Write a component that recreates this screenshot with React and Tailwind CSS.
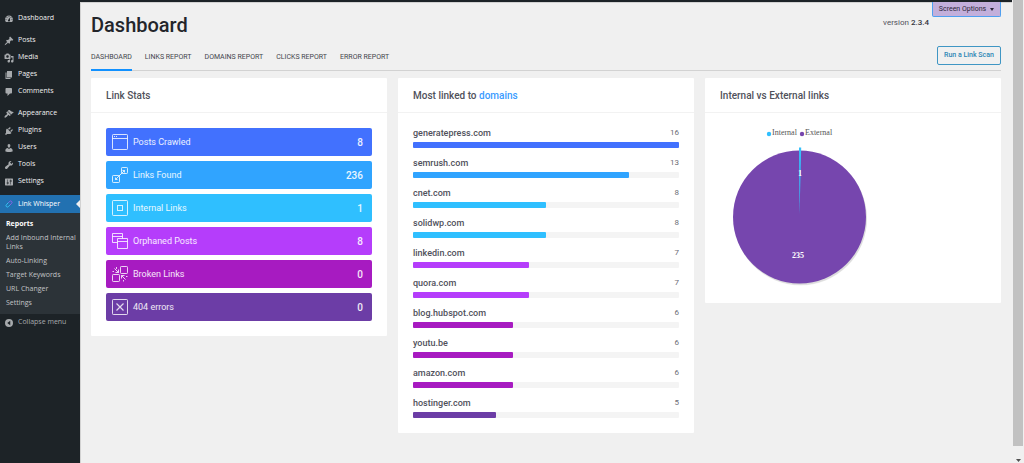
import React from "react";

const ICONS = {
  dashboard:
    "M3.76 16h12.48c1.1-1.37 1.76-3.11 1.76-5 0-4.42-3.58-8-8-8s-8 3.58-8 8c0 1.89.66 3.63 1.76 5zM10 4c.55 0 1 .45 1 1s-.45 1-1 1-1-.45-1-1 .45-1 1-1zM6 6c.55 0 1 .45 1 1s-.45 1-1 1-1-.45-1-1 .45-1 1-1zm8 0c.55 0 1 .45 1 1s-.45 1-1 1-1-.45-1-1 .45-1 1-1zm-5.37 5.55L12 7v6c0 1.1-.9 2-2 2s-2-.9-2-2c0-.57.24-1.08.63-1.45zM4 10c.55 0 1 .45 1 1s-.45 1-1 1-1-.45-1-1 .45-1 1-1zm12 0c.55 0 1 .45 1 1s-.45 1-1 1-1-.45-1-1 .45-1 1-1z",
  posts:
    "M10.44 3.02l1.82-1.82 6.36 6.35-1.83 1.82c-1.05-.68-2.48-.57-3.41.36l-.75.75c-.92.93-1.04 2.35-.35 3.41l-1.83 1.82-2.41-2.41-2.8 2.79c-.42.42-3.38 2.71-3.8 2.29s1.86-3.39 2.28-3.81l2.79-2.79L4.1 9.36l1.83-1.82c1.05.69 2.48.57 3.4-.36l.75-.75c.93-.92 1.05-2.35.36-3.41z",
  media:
    "M13 11V4c0-.55-.45-1-1-1h-1.67L9 1H5L3.67 3H2c-.55 0-1 .45-1 1v7c0 .55.45 1 1 1h10c.55 0 1-.45 1-1zM7 4.5c1.38 0 2.5 1.12 2.5 2.5S8.38 9.5 7 9.5 4.5 8.38 4.5 7 5.62 4.5 7 4.5zM14 6h5v10.5c0 1.38-1.12 2.5-2.5 2.5S14 17.88 14 16.5s1.12-2.5 2.5-2.5c.17 0 .34.02.5.05V9h-3V6zm-4 8.05V13h2v3.5c0 1.38-1.12 2.5-2.5 2.5S7 17.88 7 16.5 8.12 14 9.5 14c.17 0 .34.02.5.05z",
  pages: "M6 15V2h10v13H6zm-1 1h8v2H3V5h2v11z",
  comments:
    "M5 2h9c1.1 0 2 .9 2 2v7c0 1.1-.9 2-2 2h-2l-5 5v-5H5c-1.1 0-2-.9-2-2V4c0-1.1.9-2 2-2z",
  appearance:
    "M14.48 11.06L7.41 3.99l1.5-1.5c.5-.56 2.3-.47 3.51.32 1.21.8 1.43 1.28 2.91 2.1 1.18.64 2.45 1.26 4.45.85zm-.71.71L6.7 4.7 4.93 6.47c-.39.39-.39 1.02 0 1.41l1.06 1.06c.39.39.39 1.03 0 1.42-.6.6-1.43 1.11-2.21 1.69-.35.26-.7.53-1.01.84C1.43 14.23.4 16.08 1.4 17.07c.99 1 2.84-.03 4.18-1.36.31-.31.58-.66.85-1.02.57-.78 1.08-1.61 1.69-2.21.39-.39 1.02-.39 1.41 0l1.06 1.06c.39.39 1.02.39 1.41 0z",
  plugins:
    "M13.11 4.36L9.87 7.6 8 5.73l3.24-3.24c.35-.34 1.05-.2 1.56.32.52.51.66 1.21.31 1.55zm-8 1.77l.91-1.12 9.01 9.01-1.19.84c-.71.71-2.63 1.16-3.82 1.16H6.14L4.9 17.26c-.59.59-1.54.59-2.12 0-.59-.58-.59-1.53 0-2.12l1.24-1.24v-3.88c0-1.13.4-3.19 1.09-3.89zm7.26 3.97l3.24-3.24c.34-.35 1.04-.21 1.55.31.52.51.66 1.21.31 1.55l-3.24 3.25z",
  users:
    "M10 9.25c-2.27 0-2.73-3.44-2.73-3.44C7 4.02 7.82 2 9.97 2c2.16 0 2.98 2.02 2.71 3.81 0 0-.41 3.44-2.68 3.44zm0 2.57L12.72 10c2.39 0 4.52 2.33 4.52 4.53v2.49s-3.65 1.13-7.24 1.13c-3.65 0-7.24-1.13-7.24-1.13v-2.49c0-2.25 1.94-4.48 4.47-4.48z",
  tools:
    "M16.68 9.77c-1.34 1.34-3.3 1.67-4.95.99l-5.41 6.52c-.99.99-2.59.99-3.58 0s-.99-2.59 0-3.57l6.52-5.42c-.68-1.65-.35-3.61.99-4.95 1.28-1.28 3.12-1.62 4.72-1.06l-2.89 2.89 2.82 2.82 2.86-2.87c.53 1.58.18 3.39-1.08 4.65z",
  settings:
    "M18 16V4c0-.55-.45-1-1-1H3c-.55 0-1 .45-1 1v12c0 .55.45 1 1 1h14c.55 0 1-.45 1-1zM8 11h1c.55 0 1 .45 1 1s-.45 1-1 1H8v1.5c0 .28-.22.5-.5.5s-.5-.22-.5-.5V13H6c-.55 0-1-.45-1-1s.45-1 1-1h1V5.5c0-.28.22-.5.5-.5s.5.22.5.5V11zm5-2h-1c-.55 0-1-.45-1-1s.45-1 1-1h1V5.5c0-.28.22-.5.5-.5s.5.22.5.5V7h1c.55 0 1 .45 1 1s-.45 1-1 1h-1v5.5c0 .28-.22.5-.5.5s-.5-.22-.5-.5V9z",
  collapse:
    "M10 2a8 8 0 1 0 0 16a8 8 0 0 0 0-16zM12.5 5.5v9L6.5 10z",
};

const MENU = [
  [["dashboard", "Dashboard"]],
  [
    ["posts", "Posts"],
    ["media", "Media"],
    ["pages", "Pages"],
    ["comments", "Comments"],
  ],
  [
    ["appearance", "Appearance"],
    ["plugins", "Plugins"],
    ["users", "Users"],
    ["tools", "Tools"],
    ["settings", "Settings"],
  ],
];

const SUBMENU = [
  "Reports",
  "Add Inbound Internal Links",
  "Auto-Linking",
  "Target Keywords",
  "URL Changer",
  "Settings",
];

const TABS = [
  "DASHBOARD",
  "LINKS REPORT",
  "DOMAINS REPORT",
  "CLICKS REPORT",
  "ERROR REPORT",
];

const STATS = [
  { label: "Posts Crawled", value: 8, color: "bg-[#4271fe]", icon: "window" },
  { label: "Links Found", value: 236, color: "bg-[#30a4ff]", icon: "links" },
  { label: "Internal Links", value: 1, color: "bg-[#2fbfff]", icon: "internal" },
  { label: "Orphaned Posts", value: 8, color: "bg-[#b53dfb]", icon: "orphaned" },
  { label: "Broken Links", value: 0, color: "bg-[#a71bc1]", icon: "broken" },
  { label: "404 errors", value: 0, color: "bg-[#6c3da6]", icon: "error" },
];

const DOMAINS = [
  { name: "generatepress.com", count: 16, color: "bg-[#4271fe]" },
  { name: "semrush.com", count: 13, color: "bg-[#30a4ff]" },
  { name: "cnet.com", count: 8, color: "bg-[#2fbfff]" },
  { name: "solidwp.com", count: 8, color: "bg-[#2fbfff]" },
  { name: "linkedin.com", count: 7, color: "bg-[#b53dfb]" },
  { name: "quora.com", count: 7, color: "bg-[#b53dfb]" },
  { name: "blog.hubspot.com", count: 6, color: "bg-[#a71bc1]" },
  { name: "youtu.be", count: 6, color: "bg-[#a71bc1]" },
  { name: "amazon.com", count: 6, color: "bg-[#a71bc1]" },
  { name: "hostinger.com", count: 5, color: "bg-[#6c3da6]" },
];

function MenuIcon({ name }) {
  return (
    <svg viewBox="0 0 20 20" className="h-[10px] w-[10px] shrink-0 fill-[#a7aaad]" aria-hidden="true">
      <path fillRule="evenodd" d={ICONS[name]} />
    </svg>
  );
}

function Sidebar() {
  return (
    <aside className="w-20 shrink-0 bg-[#1d2327] pt-2 font-['Open_Sans','Noto_Sans',sans-serif] text-[7px] font-medium text-[#f0f0f1]">
      <nav aria-label="Main menu">
        <div className="mb-[5px] flex flex-col gap-[5px]">
          {MENU.map((group, i) => (
            <ul key={i}>
              {group.map(([icon, label]) => (
                <li key={label}>
                  <a href="#" className="flex h-[17px] items-center gap-1 pl-1">
                    <MenuIcon name={icon} />
                    {label}
                  </a>
                </li>
              ))}
            </ul>
          ))}
        </div>
        <a href="#" className="relative flex h-[18px] items-center gap-1 bg-[#2271b1] pl-1 text-white">
          <svg viewBox="0 0 20 20" className="h-[10px] w-[10px] shrink-0" fill="none" strokeWidth="2" strokeLinecap="round" aria-hidden="true">
            <path d="M9 7l2.500-2.200a2.600 2.600 0 0 1 3.700 3.700L12 12" stroke="#8a63e8" />
            <path d="M11 13l-2.500 2.200a2.600 2.600 0 0 1-3.700-3.700L8 8" stroke="#35c4f5" />
          </svg>
          Link Whisper
          <svg viewBox="0 0 4 8" className="absolute right-0 top-[5px] h-2 w-1 fill-[#f0f0f1]" aria-hidden="true">
            <path d="M4 0v8L0 4z" />
          </svg>
        </a>
        <ul className="flex flex-col gap-px bg-[#2c3338] pt-1 pb-[5px] font-normal text-[#c3c4c7]">
          {SUBMENU.map((label, i) => (
            <li key={label}>
              <a href="#" className={"block py-[2px] pl-[6px] leading-[9px] " + (i === 0 ? "font-bold text-white" : "")}>
                {label}
              </a>
            </li>
          ))}
        </ul>
        <button type="button" className="flex h-[17px] w-full items-center gap-1 pl-1 font-normal text-[#a7aaad]">
          <MenuIcon name="collapse" />
          Collapse menu
        </button>
      </nav>
    </aside>
  );
}

function StatIcon({ name }) {
  const shapes = {
    window: (
      <>
        <rect x="0.5" y="0.5" width="15" height="15" rx="0.8" />
        <path d="M0.500 4.500h15M2 2.500h1M4 2.500h1" />
      </>
    ),
    links: (
      <>
        <rect x="9.5" y="0.5" width="6" height="6" rx="0.8" />
        <rect x="0.5" y="8.500" width="7" height="7" rx="0.8" />
        <path d="M3.500 12.500L12.500 3.500M10.500 3.500h2v2M3.500 10.500v2h2" />
      </>
    ),
    internal: (
      <>
        <rect x="0.5" y="0.5" width="15" height="15" rx="0.8" />
        <rect x="5.500" y="5.500" width="5" height="5" />
      </>
    ),
    orphaned: (
      <>
        <path d="M5.500 9.500H0.500V0.500h10v5M0.500 3.500h10M5.500 5.500h10v10h-10zM5.500 8.500h10" />
      </>
    ),
    broken: (
      <>
        <rect x="8.500" y="0.500" width="7" height="7" rx="0.8" />
        <rect x="0.500" y="8.500" width="7" height="7" rx="0.8" />
        <path d="M2.500 2.500l4 4M6.500 3.500v3h-3M13.500 13.500l-4-4M9.500 12.500v-3h3M4.500 1v2M0.500 5.500h1.500M14 10.500h1.500M11.500 14v1.500" />
      </>
    ),
    error: (
      <>
        <rect x="0.5" y="0.5" width="15" height="15" rx="0.8" />
        <path d="M4.500 4.500l7 7M11.500 4.500l-7 7" strokeWidth="1.200" />
      </>
    ),
  };
  return (
    <svg viewBox="0 0 16 16" className="h-4 w-4 shrink-0 stroke-white/80" fill="none" strokeWidth="1" aria-hidden="true">
      {shapes[name]}
    </svg>
  );
}

function Card({ title, children }) {
  return (
    <section className="rounded-[1px] bg-white">
      <h2 className="flex h-[35px] items-center border-b border-[#f2f2f2] px-[15px] text-[10px] font-medium text-[#50515b]">
        {title}
      </h2>
      {children}
    </section>
  );
}

function PieChart() {
  return (
    <svg viewBox="0 0 190 190" className="block h-[190px] w-[190px]" role="img" aria-label="Internal 1, External 235">
      <circle cx="95.500" cy="106" r="66.500" fill="#000" opacity="0.060" />
      <circle cx="95.500" cy="105.500" r="66.500" fill="#000" opacity="0.080" />
      <circle cx="94.500" cy="104" r="66.500" fill="#7646ae" />
      <path d="M94.500 102L94 34.500h2.200z" fill="#36c0fa" />
      <g className="font-['Liberation_Serif',serif] text-[8px]">
        <circle cx="64" cy="21" r="2.200" fill="#2fbfff" />
        <text x="67" y="22" fill="#555">Internal</text>
        <circle cx="97" cy="21" r="2.200" fill="#7646ae" />
        <text x="100" y="22" fill="#555">External</text>
        <g fill="#fff" fontWeight="700" textAnchor="middle">
          <text x="95" y="63">1</text>
          <text x="93" y="145">235</text>
        </g>
      </g>
    </svg>
  );
}

export default function App() {
  const max = DOMAINS[0].count;
  return (
    <div className="flex min-h-screen bg-[#f0f0f0] font-['Roboto',sans-serif]">
      <div className="flex flex-1 flex-col">
        <div className="h-[2px] bg-[#1d2327]" />
        <div className="flex flex-1">
          <Sidebar />
          <main className="flex-1 border-t border-l border-[#d2d2d2] pr-[11px] pl-[10px]">
            <header className="flex h-[40px] items-start justify-between">
              <h1 className="pt-[9px] text-[20px] leading-[26px] font-medium text-[#23252b]">Dashboard</h1>
              <div className="flex items-start gap-[3px]">
                <p className="pt-[14px] text-[8px] leading-[12px] text-[#50515b]">
                  version <b className="font-medium text-[#33343c]">2.3.4</b>
                </p>
                <button
                  type="button"
                  className="-mt-px flex h-[15px] w-[69px] items-center justify-center gap-1 rounded-b-[2px] border border-t-0 border-[#4f9ff0] bg-[#c3afdb] text-[7px] text-[#2c2638]"
                >
                  Screen Options
                  <svg viewBox="0 0 4 3" className="h-[3px] w-1 fill-current" aria-hidden="true">
                    <path d="M0 0h4L2 3z" />
                  </svg>
                </button>
              </div>
            </header>

            <div className="flex h-[28px] items-stretch justify-between border-b border-[#d2d2d2]">
              <nav className="-mb-px flex gap-[13px] text-[7px] text-[#44454d]" aria-label="Reports">
                {TABS.map((tab, i) => (
                  <a
                    key={tab}
                    href="#"
                    className={
                      "flex items-center border-b-2 pt-[2px] " + (i === 0 ? "border-[#1291ff]" : "border-transparent")
                    }
                  >
                    {tab}
                  </a>
                ))}
              </nav>
              <button
                type="button"
                className="mt-[3px] h-[19px] w-16 rounded-[2px] border border-[#3f96c4] text-[7px] font-medium whitespace-nowrap text-[#2d86b5]"
              >
                Run a Link Scan
              </button>
            </div>

            <div className="mt-[7px] grid grid-cols-3 items-start gap-[11px]">
              <Card title="Link Stats">
                <ul className="flex flex-col gap-[5px] p-[15px]">
                  {STATS.map((s) => (
                    <li
                      key={s.label}
                      className={"flex h-7 items-center gap-[5px] rounded-[2px] pr-[9px] pl-[6px] text-white/90 " + s.color}
                    >
                      <StatIcon name={s.icon} />
                      <span className="flex-1 pt-px text-[9px]">{s.label}</span>
                      <span className="text-[10px] font-medium">{s.value}</span>
                    </li>
                  ))}
                </ul>
              </Card>

              <Card
                title={
                  <span>
                    Most linked to <a href="#" className="text-[#3a9bff]">domains</a>
                  </span>
                }
              >
                <ul className="flex flex-col gap-2 px-[15px] pt-[13px] pb-[15px]">
                  {DOMAINS.map((d) => (
                    <li key={d.name}>
                      <div className="flex items-center justify-between leading-[14px] text-[#50515b]">
                        <span className="text-[9px] font-medium">{d.name}</span>
                        <span className="text-[8px] text-[#6b6c75]">{d.count}</span>
                      </div>
                      <div className="mt-[2px] h-[6px] rounded-[1px] bg-[#f4f4f4]">
                        <div className={"h-full rounded-[1px] " + d.color} style={{ width: (d.count / max) * 100 + "%" }} />
                      </div>
                    </li>
                  ))}
                </ul>
              </Card>

              <Card title="Internal vs External links">
                <PieChart />
              </Card>
            </div>
          </main>
        </div>
      </div>
      <div className="flex w-3 shrink-0 flex-col items-center justify-between bg-[#f0f0f0] pb-[1px]" aria-hidden="true">
        <div className="mb-[13px] w-[10px] flex-1 bg-[#c1c1c1]" />
        <svg viewBox="0 0 5 3" className="h-[3px] w-[5px] fill-[#505050]">
          <path d="M0 0h5L2.500 3z" />
        </svg>
      </div>
    </div>
  );
}
